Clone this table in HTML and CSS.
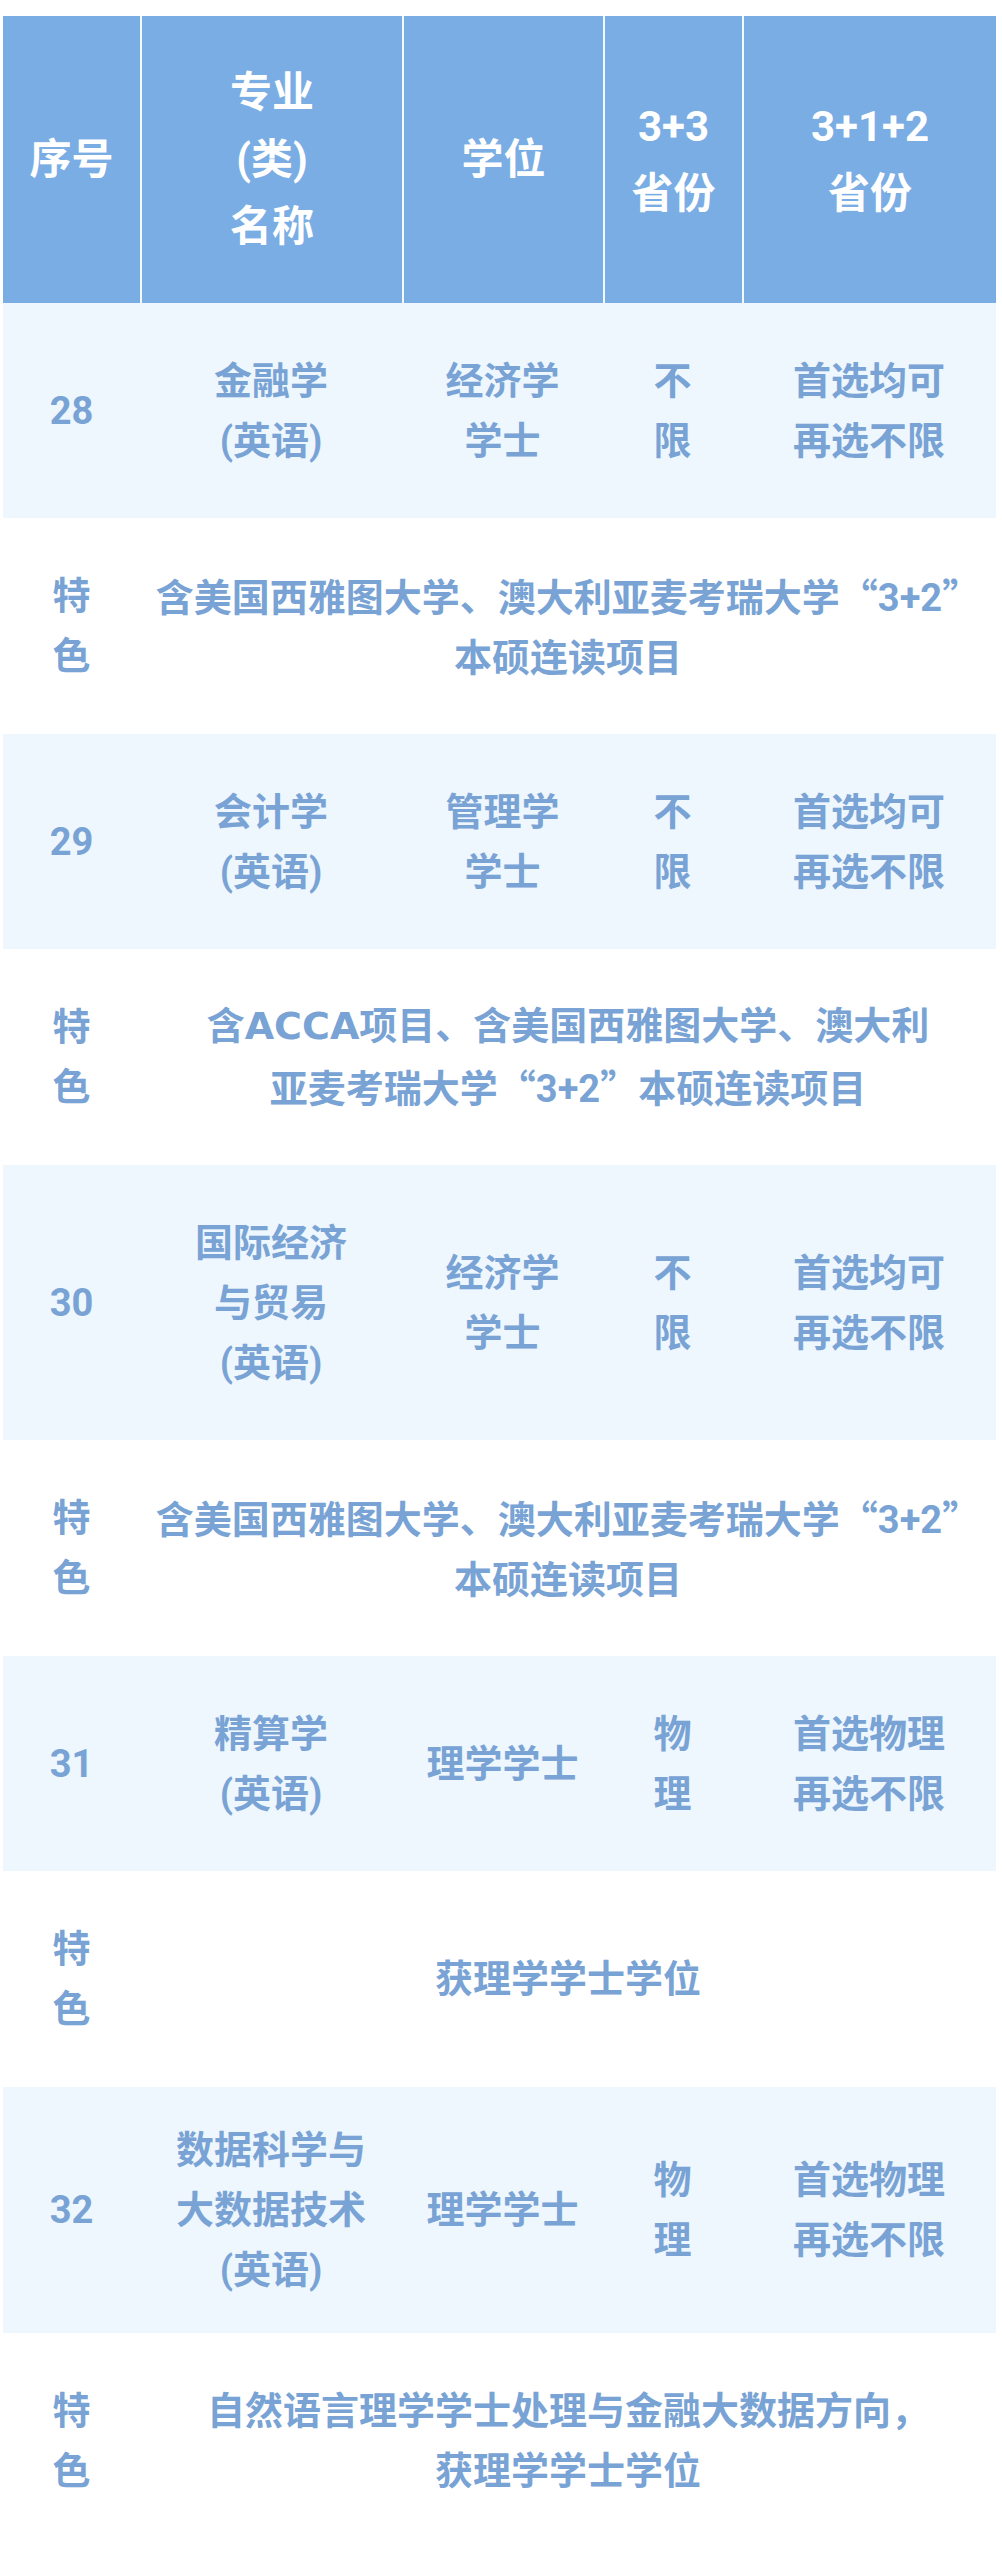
FILE: index.html
```html
<!DOCTYPE html>
<html lang="zh-CN">
<head>
<meta charset="utf-8">
<title>专业列表</title>
<link rel="stylesheet" href="styles.css">
</head>
<body>
<div class="sheet">
  <div class="grid head">
    <div class="hc">序号</div>
    <div class="hc">专业<br>(类)<br>名称</div>
    <div class="hc">学位</div>
    <div class="hc">3+3<br>省份</div>
    <div class="hc">3+1+2<br>省份</div>
  </div>

  <div class="grid data">
    <div>28</div>
    <div>金融学<br>(英语)</div>
    <div>经济学<br>学士</div>
    <div>不<br>限</div>
    <div>首选均可<br>再选不限</div>
  </div>
  <div class="grid feature">
    <div>特<br>色</div>
    <div class="span">含美国西雅图大学、澳大利亚麦考瑞大学<span class="q">“</span>3+2<span class="q">”</span><br>本硕连读项目</div>
  </div>

  <div class="grid data">
    <div>29</div>
    <div>会计学<br>(英语)</div>
    <div>管理学<br>学士</div>
    <div>不<br>限</div>
    <div>首选均可<br>再选不限</div>
  </div>
  <div class="grid feature">
    <div>特<br>色</div>
    <div class="span">含<span class="latin">ACCA</span>项目、含美国西雅图大学、澳大利<br>亚麦考瑞大学<span class="q">“</span>3+2<span class="q">”</span>本硕连读项目</div>
  </div>

  <div class="grid data tall">
    <div>30</div>
    <div>国际经济<br>与贸易<br>(英语)</div>
    <div>经济学<br>学士</div>
    <div>不<br>限</div>
    <div>首选均可<br>再选不限</div>
  </div>
  <div class="grid feature">
    <div>特<br>色</div>
    <div class="span">含美国西雅图大学、澳大利亚麦考瑞大学<span class="q">“</span>3+2<span class="q">”</span><br>本硕连读项目</div>
  </div>

  <div class="grid data">
    <div>31</div>
    <div>精算学<br>(英语)</div>
    <div>理学学士</div>
    <div>物<br>理</div>
    <div>首选物理<br>再选不限</div>
  </div>
  <div class="grid feature">
    <div>特<br>色</div>
    <div class="span">获理学学士学位</div>
  </div>

  <div class="grid data mid">
    <div>32</div>
    <div>数据科学与<br>大数据技术<br>(英语)</div>
    <div>理学学士</div>
    <div>物<br>理</div>
    <div>首选物理<br>再选不限</div>
  </div>
  <div class="grid feature">
    <div>特<br>色</div>
    <div class="span">自然语言理学学士处理与金融大数据方向，<br>获理学学士学位</div>
  </div>
</div>
</body>
</html>
```

FILE: styles.css
```css
html, body {
  margin: 0;
  padding: 0;
  background: #ffffff;
}

body {
  font-family: Roboto, "Noto Sans CJK SC", sans-serif;
  font-weight: 700;
}

.sheet {
  width: 993px;
  margin: 16px 0 0 3px;
}

.grid {
  display: grid;
  grid-template-columns: 137px 262px 201px 139px 254px;
}

.grid > div {
  display: flex;
  flex-direction: column;
  align-items: center;
  justify-content: center;
  text-align: center;
}

.head {
  height: 287px;
  background: #7aade3;
  color: #ffffff;
  font-size: 42px;
  line-height: 67px;
}

.head .hc + .hc {
  border-left: 2px solid #f4f9ff;
}

.data {
  min-height: 215px;
  background: #eef6fe;
  color: #78a3d4;
  font-size: 38px;
  line-height: 60px;
}

.data.tall {
  min-height: 275px;
}

.data.mid {
  min-height: 246px;
}

.feature {
  min-height: 216px;
  background: #ffffff;
  color: #78a3d4;
  font-size: 38px;
  line-height: 60px;
}

.feature > .span {
  display: block;
  align-self: center;
  grid-column: 2 / 6;
}

.q {
  font-family: "Noto Sans CJK SC", sans-serif;
}

.latin {
  font-family: "DejaVu Sans", Roboto, sans-serif;
  letter-spacing: 0;
}
```
